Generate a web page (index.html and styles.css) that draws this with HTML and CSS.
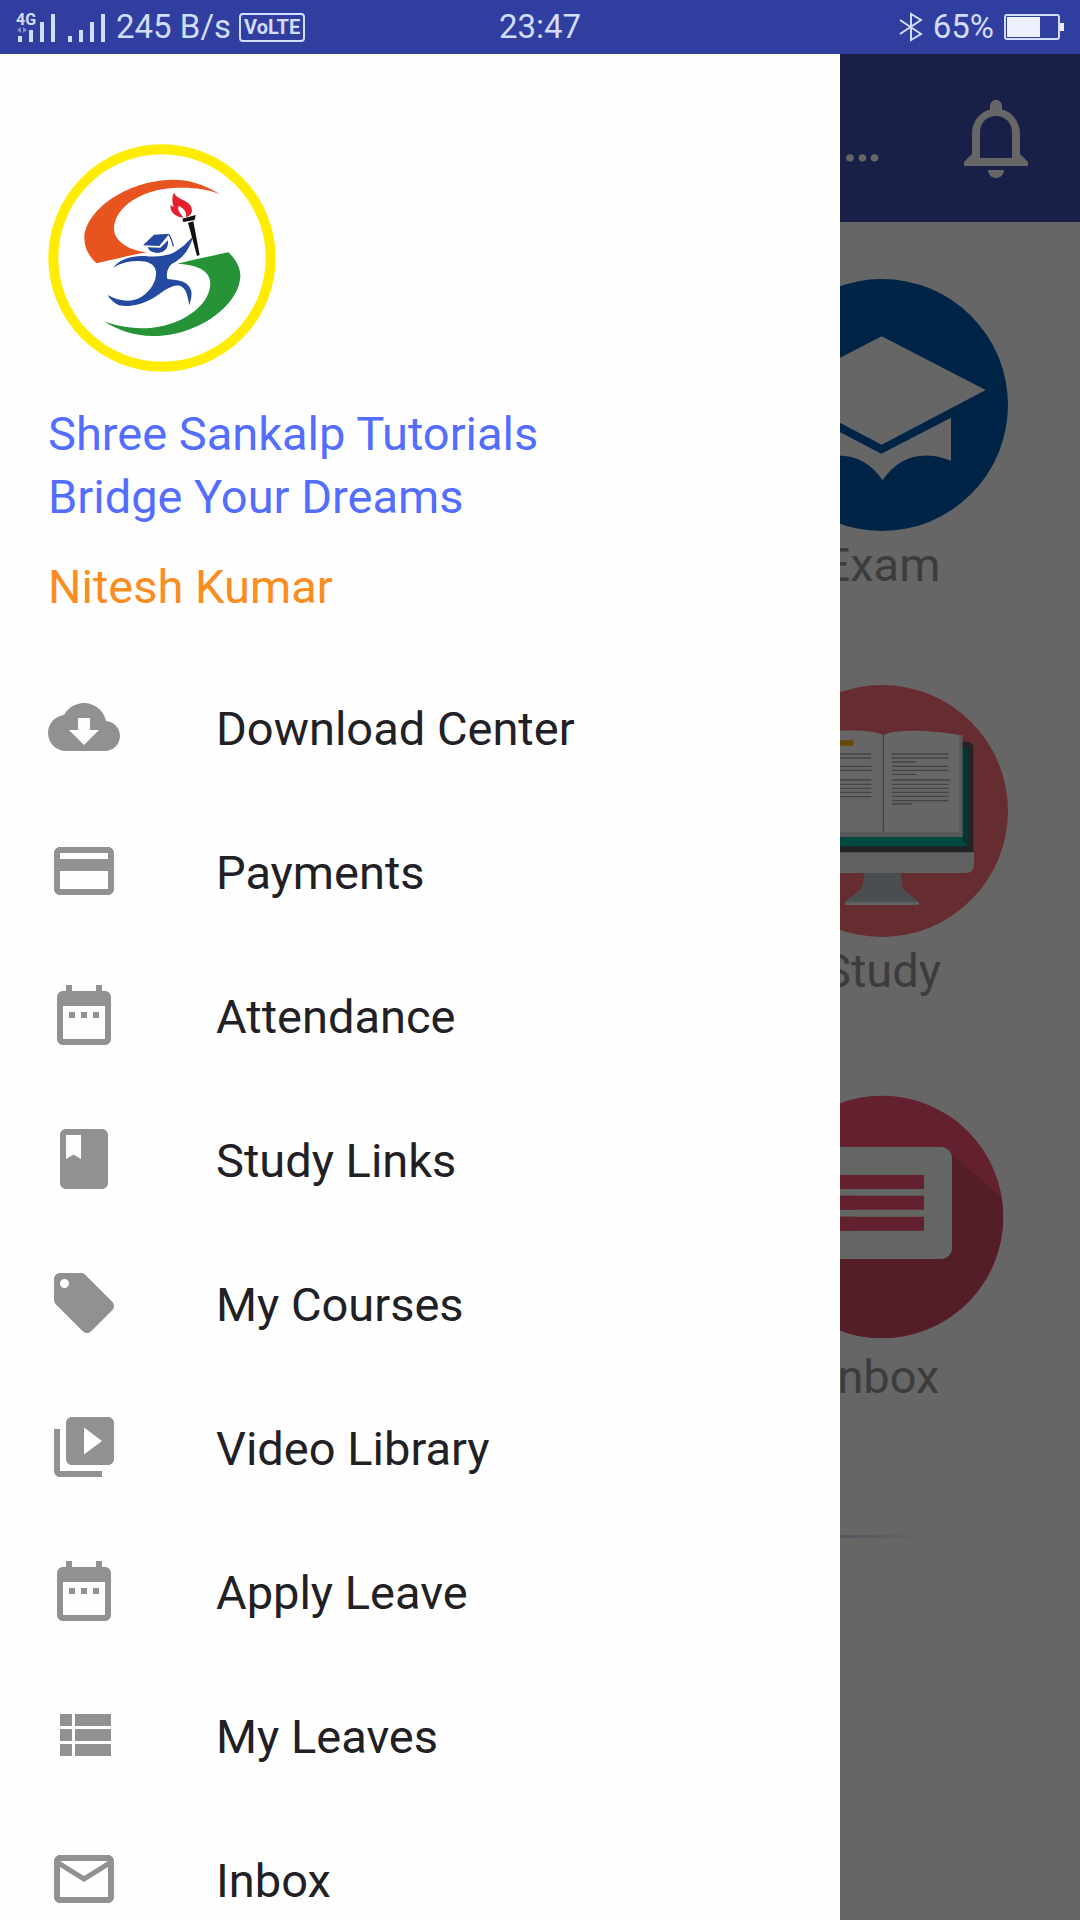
FILE: index.html
```html
<!DOCTYPE html>
<html lang="en">
<head>
    <meta charset="UTF-8">
    <meta name="viewport" content="width=device-width, initial-scale=1.0">
    <title>Shree Sankalp Tutorials</title>
    <link rel="stylesheet" href="styles.css">
</head>
<body>
    <header class="status-bar">
        <div class="status-left">
            <svg class="signals" viewBox="0 0 92 32" aria-hidden="true">
                <path d="M2 25h4v6H2zM13 19h4v12h-4zM24 11h4v20h-4zM35 3h4v28h-4zM52 25h4v6h-4zM63 19h4v12h-4zM74 11h4v20h-4zM85 3h4v28h-4z"/>
                <path class="dim" d="M1 19l4-3v6zM11 19l-4-3v6z"/>
                <text x="0" y="14">4G</text>
            </svg>
            <span class="speed">245 B/s</span>
            <span class="volte">VoLTE</span>
        </div>
        <span class="time">23:47</span>
        <div class="status-right">
            <svg class="bluetooth" viewBox="0 0 24 30" aria-hidden="true">
                <path d="M1 8l21 14-10 6V2l10 6L1 22"/>
            </svg>
            <span>65%</span>
            <svg class="battery" viewBox="0 0 60 26" aria-hidden="true">
                <rect class="battery-case" x="1" y="1" width="54" height="24" rx="2"/>
                <path d="M3 3h33v20H3zM56 9h4v8h-4z"/>
            </svg>
        </div>
    </header>

    <div class="screen">
        <div class="app-bar">
            <h1 class="app-title">Shree Sankalp Tutorials…</h1>
            <button class="bell" type="button" aria-label="Notifications">
                <svg viewBox="0 0 24 24">
                    <path d="M12 22c1.100 0 2-.9 2-2h-4c0 1.100.9 2 2 2zm6-6v-5c0-3.070-1.900-5.500-4.500-6.130V4c0-.83-.67-1.500-1.500-1.500s-1.500.67-1.500 1.500v.87C7.900 5.500 6 7.930 6 11v5l-2 2v1h16v-1l-2-2zm-2 1H8v-6.500c0-2.300 1.700-4 4-4s4 1.700 4 4V17z"/>
                </svg>
            </button>
        </div>

        <main class="tiles">
            <a class="tile" href="#exam">
                <svg viewBox="-222 28 756 756" aria-hidden="true">
                    <circle cx="156" cy="406" r="378" fill="#005aaf"/>
                    <path fill="#fff" d="M155 200l312 161-312 164-312-164zM363 444v129C280 540 205 560 158 632 110 560 35 540-53 573V444l207 108z"/>
                </svg>
                <span>Exam</span>
            </a>
            <a class="tile" href="#study">
                <svg viewBox="-222 42 756 756" aria-hidden="true">
                    <circle cx="156" cy="420" r="378" fill="#fc7079"/>
                    <path fill="#53585a" d="M-118 546V232q0-20 20-20h508q20 0 20 20v314z"/>
                    <path fill="#00b3a0" d="M-98 526V234h510v292z"/>
                    <path fill="#008c7d" d="M397 234h15v292l-15-20z"/>
                    <path fill="#eff1ef" d="M-118 544h550v36q0 26-26 26H-92q-26 0-26-26z"/>
                    <path fill="#b9c2c8" d="M104 606h108l6 46 49 42H45l50-42z"/>
                    <path fill="#eff1ef" d="M45 692h222v10H45z"/>
                    <path fill="#dedde0" d="M-84 498V192h482v306z"/>
                    <path fill="#fff" d="M160 192C120 172 0 176-78 192v292h466V192C310 178 200 172 160 192z"/>
                    <path fill="#a9a8ac" d="M158 192h4v290h-4z"/>
                    <path fill="#ffb400" d="M-40 208h110v16H-40z"/>
                    <path stroke="#a9a8ac" stroke-width="4" d="M185 249h171m-171 12h171m-171 12h73m-73 13h171m-171 12h171m-171 12h73m-73 17h177m-177 13h171m-171 12h171m-171 12h171m-171 12h171m-171 13h171m-171 10h60M-50 249h174m-174 12h174m-174 25h174m-174 12h174m-174 29h174m-174 13h174m-174 12h174m-174 12h174m-174 13h174"/>
                </svg>
                <span>Study</span>
            </a>
            <a class="tile" href="#inbox">
                <svg viewBox="-222 39 756 756" aria-hidden="true">
                    <circle cx="156" cy="417" r="364" fill="#f85275"/>
                    <path fill="#d24b66" d="M346 214l168 142A364 364 0 0 1 12 751L-40 530z"/>
                    <rect x="-54" y="207" width="420" height="336" rx="34" fill="#fafffa"/>
                    <path fill="#f85275" d="M30 291h252v42H30zM30 353h252v42H30zM30 416h252v42H30z"/>
                    <path fill="#f85275" d="M-12 291h84v42h-84zM-12 353h84v42h-84zM-12 416h84v42h-84z"/>
                </svg>
                <span>Inbox</span>
            </a>
        </main>
        <hr class="divider">

        <div class="scrim"></div>

        <aside class="drawer">
            <div class="profile">
                <svg class="logo" viewBox="54 42 684 684" role="img" aria-label="Shree Sankalp Tutorials logo">
                    <circle cx="396" cy="384" r="326" fill="#fff" stroke="#ffec00" stroke-width="30"/>
                    <path fill="#e85420" d="M570 193C520 160 470 148 425 149 290 152 165 240 163 325c0 30 15 55 37 75 45-10 100-25 150-33-60-7-95-37-98-67-2-70 88-122 178-126 50-3 100 2 140 19z"/>
                    <path fill="#259336" d="M595 367c25 23 37 48 36 73-6 90-131 178-261 178-60-1-110-18-148-45 38 17 88 22 128 22 100-5 190-65 191-135-1-35-31-55-99-59 53-13 103-23 153-34z"/>
                    <path fill="#2349a0" d="M250 413c20-28 60-37 95-35 35 4 65 0 85-10 25-13 45-33 60-51-10 38-30 68-65 85-13 13-17 28-13 45 38 3 63 8 71 33 4 15-1 30-5 46-5-26-8-51-28-59-30-5-55 23-85 40-35 19-75 26-100 18-15-8-25-17-32-30 37 20 72 23 102 5 30-20 45-50 43-75-3-25-28-33-58-32-25 1-50 7-70 20z"/>
                    <path fill="#2349a0" d="M339 346l33-32 46-3-30 37zM353 352l38 1 23-22c2 24-10 37-30 38-16 0-27-6-31-17z"/>
                    <path fill="none" stroke="#2349a0" stroke-width="4" d="M416 313c6 8 10 18 14 36"/>
                    <path fill="#e3202b" d="M432 187c6 24 52 22 54 53 0 12-8 18-18 22 3-18-8-28-22-34-6 12 6 22 14 35-26-2-41-18-38-38l9 6c-6-16-5-30 1-44z"/>
                    <path fill="#111" d="M457 266l40-11-3 15-34 6zM474 278l16-4 19 101-8 3z"/>
                </svg>
                <p class="institute">Shree Sankalp Tutorials<br>Bridge Your Dreams</p>
                <p class="student">Nitesh Kumar</p>
            </div>
            <nav class="menu">
                <a href="#download-center">
                    <svg viewBox="0 0 24 24"><path d="M19.35 10.04C18.67 6.59 15.64 4 12 4 9.11 4 6.6 5.64 5.35 8.04 2.34 8.36 0 10.91 0 14c0 3.31 2.69 6 6 6h13c2.76 0 5-2.24 5-5 0-2.64-2.05-4.78-4.65-4.96zM17 13l-5 5-5-5h3V9h4v4h3z"/></svg>
                    <span>Download Center</span>
                </a>
                <a href="#payments">
                    <svg viewBox="0 0 24 24"><path d="M20 4H4c-1.11 0-1.99.89-1.99 2L2 18c0 1.11.89 2 2 2h16c1.11 0 2-.89 2-2V6c0-1.11-.89-2-2-2zm0 14H4v-6h16v6zm0-10H4V6h16v2z"/></svg>
                    <span>Payments</span>
                </a>
                <a href="#attendance">
                    <svg viewBox="0 0 24 24"><path d="M9 11H7v2h2v-2zm4 0h-2v2h2v-2zm4 0h-2v2h2v-2zm2-7h-1V2h-2v2H8V2H6v2H5c-1.11 0-1.99.9-1.99 2L3 20c0 1.1.89 2 2 2h14c1.1 0 2-.9 2-2V6c0-1.1-.9-2-2-2zm0 16H5V9h14v11z"/></svg>
                    <span>Attendance</span>
                </a>
                <a href="#study-links">
                    <svg viewBox="0 0 24 24"><path d="M18 2H6c-1.1 0-2 .9-2 2v16c0 1.1.9 2 2 2h12c1.1 0 2-.9 2-2V4c0-1.1-.9-2-2-2zM6 4h5v8l-2.500-1.500L6 12V4z"/></svg>
                    <span>Study Links</span>
                </a>
                <a href="#my-courses">
                    <svg viewBox="0 0 24 24"><path d="M21.410 11.580l-9-9C12.050 2.220 11.550 2 11 2H4c-1.100 0-2 .9-2 2v7c0 .55.22 1.050.59 1.420l9 9c.36.36.86.58 1.410.58.55 0 1.050-.22 1.410-.59l7-7c.37-.36.59-.86.59-1.410 0-.55-.23-1.060-.59-1.420zM5.500 7C4.670 7 4 6.330 4 5.500S4.670 4 5.500 4 7 4.670 7 5.500 6.330 7 5.500 7z"/></svg>
                    <span>My Courses</span>
                </a>
                <a href="#video-library">
                    <svg viewBox="0 0 24 24"><path d="M4 6H2v14c0 1.1.9 2 2 2h14v-2H4V6zm16-4H8c-1.1 0-2 .9-2 2v12c0 1.1.9 2 2 2h12c1.1 0 2-.9 2-2V4c0-1.1-.9-2-2-2zm-8 12.500v-9l6 4.500-6 4.500z"/></svg>
                    <span>Video Library</span>
                </a>
                <a href="#apply-leave">
                    <svg viewBox="0 0 24 24"><path d="M9 11H7v2h2v-2zm4 0h-2v2h2v-2zm4 0h-2v2h2v-2zm2-7h-1V2h-2v2H8V2H6v2H5c-1.11 0-1.99.9-1.99 2L3 20c0 1.1.89 2 2 2h14c1.1 0 2-.9 2-2V6c0-1.1-.9-2-2-2zm0 16H5V9h14v11z"/></svg>
                    <span>Apply Leave</span>
                </a>
                <a href="#my-leaves">
                    <svg viewBox="0 0 24 24"><path d="M4 14h4v-4H4v4zm0 5h4v-4H4v4zM4 9h4V5H4v4zm5 5h12v-4H9v4zm0 5h12v-4H9v4zM9 5v4h12V5H9z"/></svg>
                    <span>My Leaves</span>
                </a>
                <a href="#inbox">
                    <svg viewBox="0 0 24 24"><path d="M20 4H4c-1.100 0-1.990.9-1.990 2L2 18c0 1.100.9 2 2 2h16c1.100 0 2-.9 2-2V6c0-1.100-.9-2-2-2zm0 14H4V8l8 5 8-5v10zm-8-7L4 6h16l-8 5z"/></svg>
                    <span>Inbox</span>
                </a>
            </nav>
        </aside>
    </div>
</body>
</html>
```

FILE: styles.css
```css
* {
    box-sizing: border-box;
}

body {
    margin: 0;
    height: 100vh;
    display: flex;
    flex-direction: column;
    overflow: hidden;
    font-family: Roboto, sans-serif;
    font-size: 47px;
    line-height: 56px;
    background-color: #fff;
}

a {
    color: inherit;
    text-decoration: none;
}

svg {
    display: block;
    flex-shrink: 0;
}

/* status bar */
.status-bar {
    display: grid;
    grid-template-columns: 1fr auto 1fr;
    align-items: center;
    height: 54px;
    padding: 0 16px;
    background-color: #303f9f;
    color: #d2dcfc;
    fill: #d2dcfc;
    font-size: 33px;
    line-height: 54px;
}

.status-left,
.status-right {
    display: flex;
    align-items: center;
}

.status-right {
    justify-content: flex-end;
    gap: 10px;
}

.signals {
    width: 92px;
    height: 32px;
    font-size: 16px;
    font-weight: bold;
}

.dim {
    opacity: 0.5;
}

.speed {
    margin: 0 8px;
}

.volte {
    height: 29px;
    padding: 0 3px;
    border: 2px solid #d2dcfc;
    border-radius: 4px;
    font-size: 20px;
    line-height: 25px;
    font-weight: bold;
}

.bluetooth {
    width: 24px;
    height: 30px;
    fill: none;
    stroke: #d2dcfc;
    stroke-width: 2px;
}

.battery {
    width: 60px;
    height: 26px;
    fill: #eef0fc;
}

.battery-case {
    fill: none;
    stroke: #d2dcfc;
    stroke-width: 2px;
}

/* page behind the drawer */
.screen {
    position: relative;
    flex: 1;
    min-height: 0;
    overflow: hidden;
}

.app-bar {
    display: flex;
    align-items: center;
    justify-content: flex-end;
    gap: 66px;
    height: 168px;
    padding: 0 36px;
    background-color: #3f51b5;
    color: #fff;
}

.app-title {
    margin: 0;
    padding-top: 8px;
    font-size: 56px;
    font-weight: 500;
    white-space: nowrap;
}

.bell {
    width: 96px;
    height: 96px;
    padding: 0;
    border: none;
    background: none;
    fill: #fff;
    cursor: pointer;
}

.tiles {
    display: grid;
    grid-template-columns: repeat(3, 1fr);
    row-gap: 92px;
    padding: 57px 27px 0;
}

.tile {
    grid-column: 3;
    display: flex;
    flex-direction: column;
    align-items: center;
    gap: 6px;
    color: #98979a;
}

.tile svg {
    width: 252px;
    height: 252px;
}

.divider {
    height: 3px;
    width: 72%;
    margin: 130px auto 0;
    border: none;
    background: linear-gradient(to right, transparent, #3f51b5, transparent);
}

.scrim {
    position: absolute;
    inset: 0;
    background-color: rgba(0, 0, 0, 0.6);
}

/* drawer */
.drawer {
    position: absolute;
    top: 0;
    bottom: 0;
    left: 0;
    width: calc(100% - 240px);
    overflow: hidden;
    background-color: #fefefe;
}

.profile {
    padding: 90px 48px 37px;
    line-height: 63px;
}

.logo {
    width: 228px;
    height: 228px;
}

.institute {
    margin: 30px 0 27px;
    color: #536dfe;
}

.student {
    margin: 0;
    color: #fb8c1e;
}

.menu a {
    display: flex;
    align-items: center;
    gap: 96px;
    height: 144px;
    padding: 0 48px;
    color: #212024;
}

.menu svg {
    width: 72px;
    height: 72px;
    fill: #929093;
}

.menu span {
    padding-top: 4px;
}
```
